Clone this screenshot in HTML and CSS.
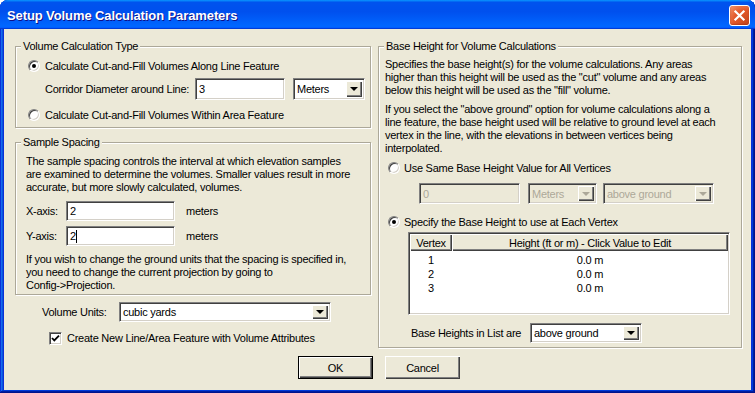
FILE: index.html
```html
<!DOCTYPE html>
<html lang="en">

<head>
    <meta charset="UTF-8">
    <title>Setup Volume Calculation Parameters</title>
    <link rel="stylesheet" href="styles.css">
</head>

<body>
    <div class="window">
        <div class="titlebar">
            <span class="title">Setup Volume Calculation Parameters</span>
            <button class="close" aria-label="Close">
                <svg width="21" height="21" viewBox="0 0 21 21">
                    <path d="M6 6 L15 15 M15 6 L6 15" stroke="#fff" stroke-width="2.4" stroke-linecap="square" />
                </svg>
            </button>
        </div>

        <div class="client">
            <div class="columns">
                <div class="col-left">
                    <fieldset class="group">
                        <legend>Volume Calculation Type</legend>
                        <div class="group-body type-body">
                            <div class="radio-row">
                                <span class="radio checked"></span>
                                <span>Calculate Cut-and-Fill Volumes Along Line Feature</span>
                            </div>
                            <div class="corridor-row">
                                <span class="corridor-label">Corridor Diameter around Line:</span>
                                <div class="edit edit-corridor">3</div>
                                <div class="combo combo-meters">
                                    <span class="combo-text">Meters</span>
                                    <span class="combo-btn"></span>
                                </div>
                            </div>
                            <div class="radio-row second">
                                <span class="radio"></span>
                                <span>Calculate Cut-and-Fill Volumes Within Area Feature</span>
                            </div>
                        </div>
                    </fieldset>

                    <fieldset class="group spacing">
                        <legend>Sample Spacing</legend>
                        <div class="group-body spacing-body">
                            <p class="text">The sample spacing controls the interval at which elevation samples<br>are examined to determine the volumes. Smaller values result in more<br>accurate, but more slowly calculated, volumes.</p>
                            <div class="axis-row">
                                <span class="axis-label">X-axis:</span>
                                <div class="edit edit-axis">2</div>
                                <span class="axis-unit">meters</span>
                            </div>
                            <div class="axis-row y">
                                <span class="axis-label">Y-axis:</span>
                                <div class="edit edit-axis">2<span class="caret"></span></div>
                                <span class="axis-unit">meters</span>
                            </div>
                            <p class="text note">If you wish to change the ground units that the spacing is specified in,<br>you need to change the current projection by going to<br>Config-&gt;Projection.</p>
                        </div>
                    </fieldset>

                    <div class="units-row">
                        <span class="units-label">Volume Units:</span>
                        <div class="combo combo-units">
                            <span class="combo-text">cubic yards</span>
                            <span class="combo-btn"></span>
                        </div>
                    </div>

                    <div class="check-row">
                        <span class="check">
                            <svg width="9" height="9" viewBox="0 0 9 9">
                                <path d="M1 4 L3.3 6.4 L8 1.6" stroke="#000" stroke-width="1.8" fill="none" />
                            </svg>
                        </span>
                        <span>Create New Line/Area Feature with Volume Attributes</span>
                    </div>
                </div>

                <div class="col-right">
                    <fieldset class="group base">
                        <legend>Base Height for Volume Calculations</legend>
                        <div class="group-body base-body">
                            <p class="text">Specifies the base height(s) for the volume calculations. Any areas<br>higher than this height will be used as the "cut" volume and any areas<br>below this height will be used as the "fill" volume.</p>
                            <p class="text para2">If you select the "above ground" option for volume calculations along a<br>line feature, the base height used will be relative to ground level at each<br>vertex in the line, with the elevations in between vertices being<br>interpolated.</p>

                            <div class="radio-row base-radio">
                                <span class="radio"></span>
                                <span>Use Same Base Height Value for All Vertices</span>
                            </div>
                            <div class="disabled-row">
                                <div class="edit edit-base disabled">0</div>
                                <div class="combo combo-base-units disabled">
                                    <span class="combo-text">Meters</span>
                                    <span class="combo-btn"></span>
                                </div>
                                <div class="combo combo-base-ref disabled">
                                    <span class="combo-text">above ground</span>
                                    <span class="combo-btn"></span>
                                </div>
                            </div>

                            <div class="radio-row base-radio second">
                                <span class="radio checked"></span>
                                <span>Specify the Base Height to use at Each Vertex</span>
                            </div>

                            <div class="listview">
                                <div class="lv-header">
                                    <span class="lv-col">Vertex</span>
                                    <span class="lv-col">Height (ft or m) - Click Value to Edit</span>
                                </div>
                                <div class="lv-rows">
                                    <div class="lv-row"><span>1</span><span>0.0 m</span></div>
                                    <div class="lv-row"><span>2</span><span>0.0 m</span></div>
                                    <div class="lv-row"><span>3</span><span>0.0 m</span></div>
                                </div>
                            </div>

                            <div class="list-ref-row">
                                <span class="list-ref-label">Base Heights in List are</span>
                                <div class="combo combo-list-ref">
                                    <span class="combo-text">above ground</span>
                                    <span class="combo-btn"></span>
                                </div>
                            </div>
                        </div>
                    </fieldset>
                </div>
            </div>

            <div class="buttons">
                <button class="btn default">OK</button>
                <button class="btn">Cancel</button>
            </div>
        </div>
    </div>
</body>

</html>
```

FILE: styles.css
```css
* {
    box-sizing: border-box;
    margin: 0;
    padding: 0;
}

body {
    width: 755px;
    height: 393px;
    overflow: hidden;
    font-family: 'Liberation Sans', Arial, sans-serif;
    font-size: 11px;
    letter-spacing: -0.25px;
    color: #000;
    background: #fff;
}

/* window frame */

.window {
    width: 755px;
    height: 393px;
    display: flex;
    flex-direction: column;
    background: #0831d9;
    border-radius: 8px 8px 0 0;
    box-shadow: inset -1px -1px #00138c, inset 1px 1px #0831d9, inset -2px -2px #001ea0, inset 2px 2px #166aee, inset -3px -3px #003bda, inset 3px 3px #0855dd;
}

.titlebar {
    height: 29px;
    flex-shrink: 0;
    display: flex;
    align-items: center;
    justify-content: space-between;
    padding: 2px 5px 0 7px;
    border-radius: 8px 8px 0 0;
    background: linear-gradient(180deg, #0997ff, #0053ee 8%, #0050ee 40%, #06f 88%, #06f 93%, #005bff 95%, #003dd7 96%, #003dd7);
}

.title {
    color: #fff;
    font-weight: bold;
    font-size: 13px;
    letter-spacing: -0.1px;
    text-shadow: 1px 1px #0f1089;
}

.close {
    width: 21px;
    height: 21px;
    border: 1px solid #fff;
    border-radius: 3px;
    background: radial-gradient(circle at 85% 85%, #c94a1f 0%, #e3592b 55%, #f08a60 90%);
    display: flex;
    align-items: center;
    justify-content: center;
    box-shadow: inset 0 -1px 2px rgba(120, 20, 0, 0.4);
}

.close svg {
    display: block;
}

.client {
    flex: 1;
    margin: 0 4px 3px;
    background: #ece9d8;
    padding: 11px 8px 0 11px;
    display: flex;
    flex-direction: column;
}

.columns {
    display: flex;
    gap: 7px;
}

.col-left {
    width: 356px;
}

.col-right {
    width: 364px;
}

/* group boxes */

.group {
    border: 1px solid #aca899;
    box-shadow: 1px 1px 0 #fff, inset 1px 1px 0 #fff;
    padding: 0;
    min-width: 0;
}

.group legend {
    margin-left: 5px;
    padding: 0 2px;
    line-height: 13px;
    background: #ece9d8;
}

.spacing {
    margin-top: 8px;
}

.text {
    line-height: 13px;
    white-space: nowrap;
}

.type-body {
    padding: 5px 0 4px 12px;
}

.spacing-body {
    padding: 6px 0 2px 10px;
}

.base-body {
    padding: 5px 0 4px 6px;
}

.para2 {
    margin-top: 6px;
}

/* radio buttons and checkbox */

.radio-row {
    display: flex;
    align-items: center;
    height: 16px;
    gap: 5px;
    white-space: nowrap;
}

.radio-row.second {
    margin-top: 7px;
}

.radio {
    width: 12px;
    height: 12px;
    border-radius: 50%;
    border: 1px solid;
    border-color: #808080 #fff #fff #808080;
    box-shadow: inset 1px 1px 0 #404040, inset -1px -1px 0 #d4d0c8;
    background: #fff;
    position: relative;
    flex-shrink: 0;
}

.radio.checked::after {
    content: '';
    position: absolute;
    left: 3px;
    top: 3px;
    width: 4px;
    height: 4px;
    border-radius: 50%;
    background: #000;
}

.base-radio {
    margin-top: 5px;
    padding-left: 3px;
    gap: 4px;
}

.base-radio.second {
    margin-top: 10px;
}

.check-row {
    display: flex;
    align-items: center;
    gap: 5px;
    margin-top: 9px;
    padding-left: 34px;
    height: 14px;
    white-space: nowrap;
}

.check {
    width: 13px;
    height: 13px;
    border: 1px solid;
    border-color: #808080 #fff #fff #808080;
    box-shadow: inset 1px 1px 0 #404040, inset -1px -1px 0 #d4d0c8;
    background: #fff;
    display: flex;
    align-items: center;
    justify-content: center;
}

.check svg {
    display: block;
}

/* edit boxes and combos */

.edit,
.combo {
    border: 1px solid;
    border-color: #808080 #fff #fff #808080;
    box-shadow: inset 1px 1px 0 #404040, inset -1px -1px 0 #d4d0c8;
    background: #fff;
    display: flex;
    align-items: center;
    padding-left: 3px;
    white-space: nowrap;
    flex-shrink: 0;
}

.edit.disabled,
.combo.disabled {
    background: #ece9d8;
    color: #aca899;
}

.combo {
    justify-content: space-between;
    padding: 2px;
}

.combo-text {
    padding-left: 1px;
}

.combo-btn {
    width: 16px;
    align-self: stretch;
    background: #ece9d8;
    box-shadow: inset 1px 1px 0 #fff, inset -1px -1px 0 #404040, inset -2px -2px 0 #808080;
    display: flex;
    align-items: center;
    justify-content: center;
}

.combo-btn::after {
    content: '';
    border-left: 4px solid transparent;
    border-right: 4px solid transparent;
    border-top: 4px solid #000;
    margin-left: -1px;
}

.disabled .combo-btn::after {
    border-top-color: #aca899;
}

.caret {
    display: inline-block;
    width: 1px;
    height: 13px;
    background: #000;
}

.corridor-row {
    display: flex;
    align-items: center;
    margin-top: 4px;
    padding-left: 17px;
    height: 22px;
    white-space: nowrap;
}

.corridor-label {
    width: 150px;
    flex-shrink: 0;
}

.edit-corridor {
    width: 90px;
    height: 22px;
}

.combo-meters {
    width: 72px;
    height: 22px;
    margin-left: 8px;
}

.axis-row {
    display: flex;
    align-items: center;
    margin-top: 7px;
    height: 20px;
}

.axis-row.y {
    margin-top: 5px;
}

.axis-label {
    width: 40px;
}

.edit-axis {
    width: 109px;
    height: 20px;
}

.axis-unit {
    margin-left: 11px;
}

.note {
    margin-top: 7px;
}

.units-row {
    display: flex;
    align-items: center;
    margin-top: 7px;
    padding-left: 27px;
    height: 20px;
}

.units-label {
    width: 77px;
}

.combo-units {
    width: 212px;
    height: 20px;
}

/* base height group */

.disabled-row {
    display: flex;
    align-items: center;
    margin-top: 7px;
    padding-left: 34px;
    height: 21px;
}

.edit-base {
    width: 101px;
    height: 21px;
}

.combo-base-units {
    width: 69px;
    height: 21px;
    margin-left: 8px;
}

.combo-base-ref {
    width: 111px;
    height: 21px;
    margin-left: 6px;
}

.listview {
    margin: 2px 0 0 23px;
    width: 322px;
    height: 83px;
    border: 1px solid;
    border-color: #808080 #fff #fff #808080;
    box-shadow: inset 1px 1px 0 #404040, inset -1px -1px 0 #d4d0c8;
    background: #fff;
    padding: 1px;
}

.lv-header {
    display: grid;
    grid-template-columns: 42px 1fr;
    height: 17px;
}

.lv-col {
    background: #ece9d8;
    box-shadow: inset 1px 1px 0 #fff, inset -1px -1px 0 #404040, inset -2px -2px 0 #808080;
    display: flex;
    align-items: center;
    justify-content: center;
    white-space: nowrap;
}

.lv-rows {
    padding-top: 2px;
}

.lv-row {
    display: grid;
    grid-template-columns: 42px 1fr;
    line-height: 14px;
    text-align: center;
}

.list-ref-row {
    display: flex;
    align-items: center;
    margin-top: 8px;
    padding-left: 26px;
    height: 20px;
}

.list-ref-label {
    width: 119px;
}

.combo-list-ref {
    width: 112px;
    height: 20px;
}

/* buttons */

.buttons {
    display: flex;
    justify-content: center;
    gap: 12px;
    margin-top: 8px;
}

.btn {
    width: 75px;
    height: 23px;
    font-family: 'Liberation Sans', Arial, sans-serif;
    font-size: 11px;
    letter-spacing: -0.25px;
    color: #000;
    background: #ece9d8;
    border: none;
    box-shadow: inset 1px 1px 0 #fff, inset -1px -1px 0 #404040, inset -2px -2px 0 #808080;
}

.btn.default {
    border: 1px solid #000;
}
```
